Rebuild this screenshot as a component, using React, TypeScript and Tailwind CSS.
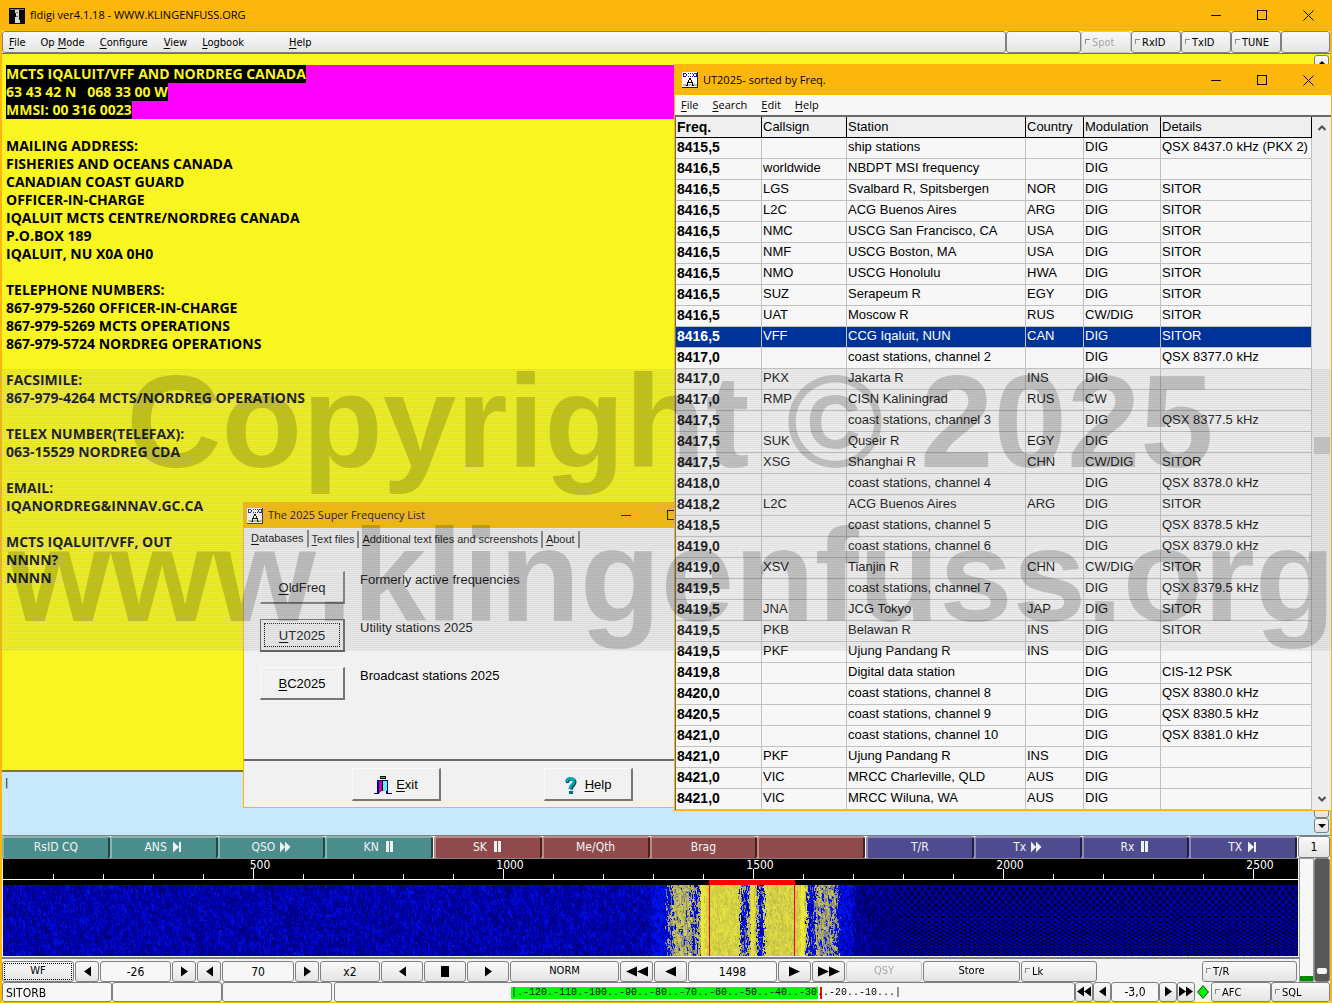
import React, { useEffect, useRef } from 'react';

const rxLines = [
  'MAILING ADDRESS:',
  'FISHERIES AND OCEANS CANADA',
  'CANADIAN COAST GUARD',
  'OFFICER-IN-CHARGE',
  'IQALUIT MCTS CENTRE/NORDREG CANADA',
  'P.O.BOX 189',
  'IQALUIT, NU X0A 0H0',
  '',
  'TELEPHONE NUMBERS:',
  '867-979-5260 OFFICER-IN-CHARGE',
  '867-979-5269 MCTS OPERATIONS',
  '867-979-5724 NORDREG OPERATIONS',
  '',
  'FACSIMILE:',
  '867-979-4264 MCTS/NORDREG OPERATIONS',
  '',
  'TELEX NUMBER(TELEFAX):',
  '063-15529 NORDREG CDA',
  '',
  'EMAIL:',
  'IQANORDREG&INNAV.GC.CA',
  '',
  'MCTS IQALUIT/VFF, OUT',
  'NNNN?',
  'NNNN',
];

const selectedLines = ['MCTS IQALUIT/VFF AND NORDREG CANADA', '63 43 42 N   068 33 00 W', 'MMSI: 00 316 0023'];

// freq, callsign, station, country, modulation, details
const stations: string[][] = [
  ['8415,5', '', 'ship stations', '', 'DIG', 'QSX 8437.0 kHz (PKX 2)'],
  ['8416,5', 'worldwide', 'NBDPT MSI frequency', '', 'DIG', ''],
  ['8416,5', 'LGS', 'Svalbard R, Spitsbergen', 'NOR', 'DIG', 'SITOR'],
  ['8416,5', 'L2C', 'ACG Buenos Aires', 'ARG', 'DIG', 'SITOR'],
  ['8416,5', 'NMC', 'USCG San Francisco, CA', 'USA', 'DIG', 'SITOR'],
  ['8416,5', 'NMF', 'USCG Boston, MA', 'USA', 'DIG', 'SITOR'],
  ['8416,5', 'NMO', 'USCG Honolulu', 'HWA', 'DIG', 'SITOR'],
  ['8416,5', 'SUZ', 'Serapeum R', 'EGY', 'DIG', 'SITOR'],
  ['8416,5', 'UAT', 'Moscow R', 'RUS', 'CW/DIG', 'SITOR'],
  ['8416,5', 'VFF', 'CCG Iqaluit, NUN', 'CAN', 'DIG', 'SITOR'],
  ['8417,0', '', 'coast stations, channel 2', '', 'DIG', 'QSX 8377.0 kHz'],
  ['8417,0', 'PKX', 'Jakarta R', 'INS', 'DIG', ''],
  ['8417,0', 'RMP', 'CISN Kaliningrad', 'RUS', 'CW', ''],
  ['8417,5', '', 'coast stations, channel 3', '', 'DIG', 'QSX 8377.5 kHz'],
  ['8417,5', 'SUK', 'Quseir R', 'EGY', 'DIG', ''],
  ['8417,5', 'XSG', 'Shanghai R', 'CHN', 'CW/DIG', 'SITOR'],
  ['8418,0', '', 'coast stations, channel 4', '', 'DIG', 'QSX 8378.0 kHz'],
  ['8418,2', 'L2C', 'ACG Buenos Aires', 'ARG', 'DIG', 'SITOR'],
  ['8418,5', '', 'coast stations, channel 5', '', 'DIG', 'QSX 8378.5 kHz'],
  ['8419,0', '', 'coast stations, channel 6', '', 'DIG', 'QSX 8379.0 kHz'],
  ['8419,0', 'XSV', 'Tianjin R', 'CHN', 'CW/DIG', 'SITOR'],
  ['8419,5', '', 'coast stations, channel 7', '', 'DIG', 'QSX 8379.5 kHz'],
  ['8419,5', 'JNA', 'JCG Tokyo', 'JAP', 'DIG', 'SITOR'],
  ['8419,5', 'PKB', 'Belawan R', 'INS', 'DIG', 'SITOR'],
  ['8419,5', 'PKF', 'Ujung Pandang R', 'INS', 'DIG', ''],
  ['8419,8', '', 'Digital data station', '', 'DIG', 'CIS-12 PSK'],
  ['8420,0', '', 'coast stations, channel 8', '', 'DIG', 'QSX 8380.0 kHz'],
  ['8420,5', '', 'coast stations, channel 9', '', 'DIG', 'QSX 8380.5 kHz'],
  ['8421,0', '', 'coast stations, channel 10', '', 'DIG', 'QSX 8381.0 kHz'],
  ['8421,0', 'PKF', 'Ujung Pandang R', 'INS', 'DIG', ''],
  ['8421,0', 'VIC', 'MRCC Charleville, QLD', 'AUS', 'DIG', ''],
  ['8421,0', 'VIC', 'MRCC Wiluna, WA', 'AUS', 'DIG', ''],
];

type Glyph = 'next' | 'ff' | 'pause';

const macroGroups: { style: string; items: { label: string; glyph?: Glyph }[] }[] = [
  {
    style: 'bg-[#4b8c8c] border-t-[#83b5b3] border-l-[#83b5b3] border-r-[#1e4848] border-b-[#2c5c5c]',
    items: [{ label: 'RsID CQ' }, { label: 'ANS', glyph: 'next' }, { label: 'QSO', glyph: 'ff' }, { label: 'KN', glyph: 'pause' }],
  },
  {
    style: 'bg-[#8f4b4b] border-t-[#bb8886] border-l-[#bb8886] border-r-[#482020] border-b-[#5c2c2c]',
    items: [{ label: 'SK', glyph: 'pause' }, { label: 'Me/Qth' }, { label: 'Brag' }, { label: '' }],
  },
  {
    style: 'bg-[#4f4b8f] border-t-[#8a88bb] border-l-[#8a88bb] border-r-[#202048] border-b-[#2c2c5c]',
    items: [{ label: 'T/R' }, { label: 'Tx', glyph: 'ff' }, { label: 'Rx', glyph: 'pause' }, { label: 'TX', glyph: 'next' }],
  },
];

const box = 'rounded-[3px] border border-[#808080] bg-linear-to-b from-[#f8f8f8] via-[#efefef] to-[#e4e4e4]';
const field = 'rounded-[3px] border border-[#808080] bg-[#f7f7f7]';

const MacroGlyph = ({ glyph }: { glyph: Glyph }) => (
  <svg width="12" height="12" viewBox="0 0 12 12" fill="#ecf1f1">
    {glyph === 'next' && <path d="M2 0.500L8 6L2 11.500ZM8 1h2v10h-2Z" />}
    {glyph === 'ff' && <path d="M1 0.500L6 6L1 11.500ZM6 0.500L11.500 6L6 11.500Z" />}
    {glyph === 'pause' && <path d="M3 0h3v11h-3ZM7 0h3v11h-3Z" />}
  </svg>
);

const Arrow = ({ dir, count = 1, wide = false }: { dir: 'left' | 'right'; count?: number; wide?: boolean }) => {
  const w = wide ? 11 : 7;
  return (
    <svg width={w * count} height="11" viewBox={`0 0 ${w * count} 11`} fill="#000" className={dir === 'left' ? 'rotate-180' : ''}>
      {Array.from({ length: count }, (_, i) => (
        <path key={i} d={`M${i * w} 0.500L${(i + 1) * w} 5.500L${i * w} 10.500Z`} />
      ))}
    </svg>
  );
};

const RadioIcon = () => (
  <svg width="16" height="16" viewBox="0 0 16 16" shapeRendering="crispEdges">
    <path d="M0 0h16v16H0Z" fill="#fff" />
    <path d="M0 15h16v1H0ZM15 0h1v16h-1Z" fill="#222" />
    <path d="M1 12h14v2H1Z" fill="#b9b9b9" />
    <path d="M1 1h1v4h-1ZM2 1h2v1h-2ZM2 4h2v1h-2ZM4 2h1v2h-1ZM6 1h1v1h-1ZM6 4h1v1h-1ZM8 1h1v1h-1ZM8 4h1v1h-1ZM10 1h1v1h-1ZM10 4h1v1h-1ZM12 1h2v1h-2ZM11 2h1v2h-1ZM12 4h2v1h-2ZM14 1h1v4h-1Z" fill="#1414d2" />
    <path d="M7 6h2v2h-2ZM6 8h1v2h-1ZM9 8h1v2h-1ZM5 10h1v3h-1ZM10 10h1v3h-1ZM6 10h4v1h-4ZM4 13h2v1h-2ZM10 13h2v1h-2Z" fill="#000" />
  </svg>
);

const CaptionButtons = () => (
  <div className="flex h-full">
    <button aria-label="Minimize" className="flex w-[46px] items-center justify-center">
      <svg width="11" height="11" shapeRendering="crispEdges"><path d="M0 5.500H10" stroke="#000" /></svg>
    </button>
    <button aria-label="Maximize" className="flex w-[46px] items-center justify-center">
      <svg width="11" height="11" shapeRendering="crispEdges"><rect x="0.500" y="0.500" width="9" height="9" fill="none" stroke="#000" /></svg>
    </button>
    <button aria-label="Close" className="flex w-[46px] items-center justify-center">
      <svg width="11" height="11"><path d="M0.500 0.500L10.500 10.500M10.500 0.500L0.500 10.500" stroke="#000" /></svg>
    </button>
  </div>
);

const MenuItem = ({ pre = '', hot, post = '', className = 'px-2' }: { pre?: string; hot: string; post?: string; className?: string }) => (
  <button className={className}>
    {pre}
    <u className="underline-offset-2">{hot}</u>
    {post}
  </button>
);

const Toggle = ({ label, width, disabled = false }: { label: string; width: string; disabled?: boolean }) => (
  <label className={`${box} ${width} flex items-center gap-0.5 pt-0.5 pl-[3px] text-[11px] ${disabled ? 'border-[#c4c4c4] text-[#a8a8a8]' : ''}`}>
    <input type="checkbox" disabled={disabled} className="mb-1 size-[5px] shrink-0 appearance-none border-t border-l border-[#8a8a8a]" />
    {label}
  </label>
);

const DialogButton = ({ children, size, focused = false }: { children: React.ReactNode; size: string; focused?: boolean }) => (
  <button
    className={`${size} flex h-[33px] items-center justify-center gap-2 bg-[#f1f1f1] text-[13px] ${
      focused ? 'border border-r-2 border-b-2 border-[#606060] p-[3px]' : 'border border-t-[#fafafa] border-l-[#fafafa] border-r-2 border-b-2 border-[#767676] pt-0.5'
    }`}
  >
    {focused ? <span className="flex h-full w-full items-center justify-center border border-dotted border-black pt-px">{children}</span> : children}
  </button>
);

// signal bands inside the passband: [from, to, level, spread]
const bands = [
  [648, 664, 0.3, 0.1],
  [664, 670, 0.42, 0.26],
  [670, 688, 0.58, 0.24],
  [688, 695, 0.38, 0.28],
  [695, 698, 0.6, 0.12],
  [698, 701, 0.97, 0.03],
  [701, 737, 0.8, 0.18],
  [737, 745, 0.36, 0.26],
  [745, 748, 0.64, 0.14],
  [748, 751, 0.9, 0.05],
  [751, 754, 0.64, 0.14],
  [754, 761, 0.34, 0.22],
  [761, 798, 0.77, 0.2],
  [798, 801, 0.97, 0.03],
  [801, 804, 0.68, 0.16],
  [804, 812, 0.33, 0.18],
  [812, 828, 0.52, 0.22],
  [828, 835, 0.44, 0.24],
  [835, 850, 0.29, 0.1],
];

const Waterfall = () => {
  const ref = useRef<HTMLCanvasElement>(null);

  useEffect(() => {
    const canvas = ref.current;
    const ctx = canvas?.getContext('2d');
    if (!canvas || !ctx) return;
    const { width, height } = canvas;
    const image = ctx.createImageData(width, height);
    let seed = 8416;
    const rand = () => {
      seed = (seed * 1664525 + 1013904223) >>> 0;
      return seed / 4294967296;
    };
    let previous = new Array(height).fill(0.5);
    for (let x = 0; x < width; x++) {
      const column: number[] = [];
      let n = rand();
      let shift = 0;
      for (let y = 0; y < height; y++) {
        if (rand() < 0.5) {
          n = rand() * 0.65 + previous[y] * 0.35;
          shift = (rand() - 0.5) * 5;
        }
        column.push(n);
        // the two steady carriers keep straight edges
        const steady = (x >= 698 && x < 701) || (x >= 798 && x < 801) || (x >= 748 && x < 751);
        const at = steady ? x : x + shift;
        const band = bands.find(([from, to]) => at >= from && at < to);
        let v = 0.235 + (n - 0.5) * 0.2;
        if (band) {
          v = band[2] + (n - 0.5) * 2 * band[3];
        } else if (x >= 850) {
          const fade = Math.min(1, (x - 850) / 60);
          const dots = Math.sin((x * Math.PI * 2) / 7) * Math.sin((y * y) / 90 + y / 2);
          v = 0.2 - 0.01 * fade + (dots > 0.5 ? -0.16 : dots < -0.7 ? 0.06 : 0) * fade + (n - 0.5) * (0.24 - 0.2 * fade);
        }
        v = Math.max(0, Math.min(1, v));
        let rgb = [0, 0, 0];
        if (v < 0.42) {
          rgb = [0, Math.max(0, (v - 0.24) * 200), Math.min(235, Math.max(0, (v - 0.02) * 790))];
        } else if (v < 0.58) {
          const t = (v - 0.42) / 0.16;
          rgb = [110 + t * 70, 110 + t * 65, 140 - t * 40];
        } else {
          const t = (v - 0.58) / 0.42;
          rgb = [185 + t * 55, 183 + t * 53, 55 + (1 - t) * n * 60];
        }
        const i = (y * width + x) * 4;
        image.data[i] = rgb[0];
        image.data[i + 1] = rgb[1];
        image.data[i + 2] = rgb[2];
        image.data[i + 3] = 255;
      }
      previous = column;
    }
    ctx.putImageData(image, 0, 0);
    ctx.fillStyle = '#f00';
    ctx.fillRect(706, 0, 1, height);
    ctx.fillRect(791, 0, 1, height);
  }, []);

  return <canvas ref={ref} width={1295} height={71} className="block h-[71px] w-full" />;
};

const Ruler = () => (
  <svg height="26" className="block w-full bg-black" shapeRendering="crispEdges">
    <path d="M0 20.500H1400" stroke="#fff" />
    {Array.from({ length: 25 }, (_, i) => {
      const x = 50 * (i + 1) + 0.5;
      return <path key={i} d={`M${x} ${(i + 1) % 5 === 0 ? 10 : 15}V20`} stroke="#fff" />;
    })}
    {[500, 1000, 1500, 2000, 2500].map((hz) => (
      <text key={hz} x={hz / 2 + 7} y="10" textAnchor="middle" fill="#fff" fontSize="12">{hz}</text>
    ))}
    <path d="M706 21H792V26H706Z" fill="#f00" />
  </svg>
);

const StationWindow = () => (
  <section className="absolute top-[64px] right-0 left-[674px] flex flex-col border border-[#fdb60a] bg-[#f7f7f7]">
    <header className="flex h-[30px] items-center bg-[#fdb60a] pl-[7px] font-['Open_Sans',sans-serif] text-[11px]">
      <RadioIcon />
      <h2 className="ml-[5px] flex-1">UT2025- sorted by Freq.</h2>
      <CaptionButtons />
    </header>
    <nav className="flex h-[20px] items-center gap-[14px] pl-[6px] font-['Open_Sans',sans-serif] text-[11px]">
      <MenuItem hot="F" post="ile" className="" />
      <MenuItem hot="S" post="earch" className="" />
      <MenuItem hot="E" post="dit" className="" />
      <MenuItem hot="H" post="elp" className="" />
    </nav>
    <div className="flex border-t-2 border-l border-[#696969]">
      <table className="flex-1 table-fixed border-separate border-spacing-0 font-['Liberation_Sans',Arial,sans-serif] text-[13px] leading-[18px]">
        <colgroup>
          <col className="w-[86px]" />
          <col className="w-[85px]" />
          <col />
          <col className="w-[58px]" />
          <col className="w-[77px]" />
          <col className="w-[151px]" />
        </colgroup>
        <thead>
          <tr className="bg-[#efefef] text-left">
            {['Freq.', 'Callsign', 'Station', 'Country', 'Modulation', 'Details'].map((name, i) => (
              <th key={name} className={`h-[21px] border-r border-b border-black p-0 pb-px pl-px ${i === 0 ? 'text-[14px] font-bold' : 'font-normal'}`}>
                {name}
              </th>
            ))}
          </tr>
        </thead>
        <tbody>
          {stations.map((row, r) => (
            <tr key={r} className={row[1] === 'VFF' ? 'bg-[#003399] text-white' : ''}>
              {row.map((cell, i) => (
                <td
                  key={i}
                  className={`h-[21px] overflow-hidden border-r border-b border-[#c0c0c0] p-0 pb-0.5 pl-px whitespace-nowrap ${i === 0 ? 'text-[14px] font-bold' : ''}`}
                >
                  {cell}
                </td>
              ))}
            </tr>
          ))}
        </tbody>
      </table>
      <div className="flex w-[19px] flex-col items-center bg-[#ededed] py-2">
        <svg width="8" height="6" fill="none" stroke="#505050" strokeWidth="2"><path d="M0.500 5L4 1.500L7.500 5" /></svg>
        <div className="mt-[306px] h-[17px] w-4 bg-[#c6c6c6]" />
        <svg width="8" height="6" fill="none" stroke="#505050" strokeWidth="2" className="mt-auto"><path d="M0.500 1L4 4.500L7.500 1" /></svg>
      </div>
    </div>
  </section>
);

const databases = [
  { hot: 'O', rest: 'ldFreq', text: 'Formerly active frequencies' },
  { hot: 'U', rest: 'T2025', text: 'Utility stations 2025' },
  { hot: 'B', rest: 'C2025', text: 'Broadcast stations 2025' },
];

const tabs = [
  { hot: 'D', rest: 'atabases' },
  { hot: 'T', rest: 'ext files' },
  { hot: 'A', rest: 'dditional text files and screenshots' },
  { hot: 'A', rest: 'bout' },
];

const LauncherWindow = () => (
  <section className="absolute top-[502px] left-[243px] flex h-[306px] w-[499px] flex-col border border-[#fdb60a] bg-[#f1f1f1] font-['Liberation_Sans',Arial,sans-serif]">
    <header className="flex h-[25px] shrink-0 items-center bg-[#fdb60a] pl-[3px] font-['Open_Sans',sans-serif] text-[11px]">
      <RadioIcon />
      <h2 className="ml-[5px] flex-1">The 2025 Super Frequency List</h2>
      <CaptionButtons />
    </header>
    <div role="tablist" className="flex h-[22px] items-center pl-1 text-[11px]">
      {tabs.map((tab, i) => (
        <button key={i} role="tab" className={`h-[17px] border-r-2 border-[#808080] px-[3px] ${i === 0 ? 'mb-0.5' : ''}`}>
          <u className="underline-offset-2">{tab.hot}</u>
          {tab.rest}
        </button>
      ))}
    </div>
    <div className="flex flex-1 flex-col gap-[15px] border-t border-[#fafafa] pt-5 pl-4">
      {databases.map((db, i) => (
        <div key={db.text} className="flex gap-[15px]">
          <DialogButton size="w-[85px]" focused={i === 1}>
            <span>
              <u className="underline-offset-2">{db.hot}</u>
              {db.rest}
            </span>
          </DialogButton>
          <p className="text-[13px] leading-[18px]">{db.text}</p>
        </div>
      ))}
    </div>
    <footer className="flex h-[48px] justify-center gap-[103px] border-t-2 border-[#6a6a6a] pt-[7px]">
      <DialogButton size="w-[89px]">
        <svg width="18" height="18" viewBox="0 0 18 18" shapeRendering="crispEdges">
          <path d="M6 0h6v3h-6Z" fill="#000" />
          <path d="M7 1h4v1h-4Z" fill="#00e000" />
          <path d="M3 4h11v13h4v1H12V5H5V18H0V17H3Z" fill="#00007f" />
          <path d="M5 5h3l0 9l-3 3Z" fill="#d000b0" />
          <path d="M8 5h1v10h-1Z" fill="#000" />
          <path d="M9 5h4v10h-4Z" fill="#5ff0f0" />
          <path d="M13 4h1v13h-1Z" fill="#00007f" />
        </svg>
        <span className="-ml-1"><u className="underline-offset-2">E</u>xit</span>
      </DialogButton>
      <DialogButton size="w-[89px]">
        <svg width="12" height="17" viewBox="0 0 12 17" fill="none">
          <path d="M2.500 6C2 1 10 1 10 5C10 8.500 6.500 8 6.500 12.500" stroke="#002c48" strokeWidth="3" />
          <path d="M1.500 5C2 0.500 9 0.500 9 4.500C9 8 5 7.500 5 12" stroke="#00a8b0" strokeWidth="3" />
          <path d="M4 14h4v3h-4Z" fill="#006878" />
        </svg>
        <span><u className="underline-offset-2">H</u>elp</span>
      </DialogButton>
    </footer>
  </section>
);

const NavButton = ({ label, width, children }: { label: string; width: string; children: React.ReactNode }) => (
  <button aria-label={label} className={`${box} ${width} flex items-center justify-center pb-px`}>
    {children}
  </button>
);

const App: React.FC = () => {
  return (
    <div className="relative flex h-screen flex-col overflow-hidden border-b border-[#fdb60a] bg-[#fdb60a] font-['DejaVu_Sans_Condensed','DejaVu_Sans',sans-serif] text-black">
      <header className="flex h-[31px] shrink-0 items-center pr-px pl-[9px] font-['Open_Sans',sans-serif] text-[11px]">
        <svg width="16" height="16" viewBox="0 0 16 16" shapeRendering="crispEdges">
          <path d="M0 0h16v16H0Z" fill="#0a0a0a" />
          <path d="M1 1h14v1H1Z" fill="#777" />
          <path d="M6 2h4v3h-4ZM7 5h3v4h-3ZM6 9h4v3h-4ZM6 12h5v3h-5Z" fill="#d8d8d8" />
          <path d="M7 4h2v1h-2ZM7 8h2v1h-2Z" fill="#777" />
          <path d="M7 1h2v1h-2Z" fill="#e06060" />
        </svg>
        <h1 className="ml-[5px] flex-1">fldigi ver4.1.18 - WWW.KLINGENFUSS.ORG</h1>
        <CaptionButtons />
      </header>

      <div className="mr-0.5 ml-0.5 flex min-h-0 flex-1 flex-col bg-[#f4f4f4]">
        <div className="flex h-[22px] shrink-0 text-[11px]">
          <nav className={`${box} flex flex-1 items-center pt-0.5`}>
            <MenuItem hot="F" post="ile" className="pr-2 pl-[6px]" />
            <MenuItem pre="Op " hot="M" post="ode" className="px-[7px]" />
            <MenuItem hot="C" post="onfigure" />
            <MenuItem hot="V" post="iew" />
            <MenuItem hot="L" post="ogbook" className="px-[7px]" />
            <MenuItem hot="H" post="elp" className="ml-[38px]" />
          </nav>
          <div className={`${box} w-[75px]`} />
          <Toggle label="Spot" width="w-[50px]" disabled />
          <Toggle label="RxID" width="w-[50px]" />
          <Toggle label="TxID" width="w-[50px]" />
          <Toggle label="TUNE" width="w-[50px]" />
          <div className={`${box} w-[49px]`} />
        </div>

        <main className="flex min-h-0 flex-1 border-t border-b-2 border-[#7d7a20] bg-[#f9f520]">
          <div className="min-w-0 flex-1 pt-[11px] pl-1 font-['Open_Sans',sans-serif] text-[14px] leading-[18px] font-bold whitespace-pre">
            {selectedLines.map((line) => (
              <p key={line} className="bg-[#ff00ff]">
                <mark className="inline-block bg-black text-[#f9f520]">{line}</mark>
              </p>
            ))}
            <p>{' '}</p>
            {rxLines.map((line, i) => (
              <p key={i}>{line || ' '}</p>
            ))}
          </div>
          <div className="w-4 pt-px">
            <button aria-label="Scroll up" className={`${box} flex h-[15px] w-[15px] items-center justify-center`}>
              <svg width="8" height="4"><path d="M0 4L4 0L8 4Z" /></svg>
            </button>
          </div>
        </main>

        <div className="flex h-[63px] shrink-0 bg-[#c8e8fc]">
          <textarea aria-label="Transmit text" defaultValue="|" className="flex-1 resize-none bg-transparent pt-1 pl-[3px] text-[11px] leading-[14px]" />
          <div className="flex w-4 flex-col justify-end pb-0.5">
            <div className={`${box} h-[46px] w-[15px]`} />
            <button aria-label="Scroll down" className={`${box} flex h-[15px] w-[15px] items-center justify-center`}>
              <svg width="8" height="4"><path d="M0 0L4 4L8 0Z" /></svg>
            </button>
          </div>
        </div>

        <div className="flex h-[23px] shrink-0 border-t border-[#808080]">
          <div className="grid flex-1 grid-cols-3 text-[12px] text-[#f2f4f4]">
            {macroGroups.map((group, g) => (
              <div key={g} className="grid grid-cols-4 pr-px">
                {group.items.map((item, i) => (
                  <button key={i} className={`${group.style} flex items-center justify-center gap-1 rounded-[3px] border-2 border-b pb-0.5`}>
                    {item.label}
                    {item.glyph && <MacroGlyph glyph={item.glyph} />}
                  </button>
                ))}
              </div>
            ))}
          </div>
          <button className={`${box} w-[32px] text-[12px]`}>1</button>
        </div>

        <div className="flex h-[124px] shrink-0">
          <div className="min-w-0 flex-1">
            <div className="border-t border-b-2 border-[#808080] px-px pb-px">
              <Ruler />
              <Waterfall />
            </div>
            <div className="mt-0.5 flex h-[21px] gap-px text-[11px]">
              <button className={`${box} w-[72px] p-px`}>
                <span className="flex h-full items-center justify-center border border-dotted border-black">WF</span>
              </button>
              <NavButton label="Lower limit down" width="w-6"><Arrow dir="left" /></NavButton>
              <input aria-label="Upper signal level" defaultValue="-26" className={`${field} w-[71px] text-center text-[12px]`} />
              <NavButton label="Lower limit up" width="w-6"><Arrow dir="right" /></NavButton>
              <NavButton label="Range down" width="w-6"><Arrow dir="left" /></NavButton>
              <input aria-label="Signal range" defaultValue="70" className={`${field} w-[72px] text-center text-[12px]`} />
              <NavButton label="Range up" width="w-6"><Arrow dir="right" /></NavButton>
              <button className={`${box} w-[60px] text-[12px]`}>x2</button>
              <NavButton label="Scroll left" width="w-[42px]"><Arrow dir="left" /></NavButton>
              <NavButton label="Center" width="w-[42px]"><span className="h-[11px] w-2 bg-black" /></NavButton>
              <NavButton label="Scroll right" width="w-[42px]"><Arrow dir="right" /></NavButton>
              <button className={`${box} w-[109px]`}>NORM</button>
              <NavButton label="Carrier fast down" width="w-[33px]"><Arrow dir="left" count={2} wide /></NavButton>
              <NavButton label="Carrier down" width="w-[33px]"><Arrow dir="left" wide /></NavButton>
              <input aria-label="Carrier" defaultValue="1498" className={`${field} w-[89px] text-center text-[12px]`} />
              <NavButton label="Carrier up" width="w-[33px]"><Arrow dir="right" wide /></NavButton>
              <NavButton label="Carrier fast up" width="w-[33px]"><Arrow dir="right" count={2} wide /></NavButton>
              <button disabled className={`${box} w-[76px] border-[#c4c4c4] text-[#a8a8a8]`}>QSY</button>
              <button className={`${box} w-[97px]`}>Store</button>
              <Toggle label="Lk" width="w-[76px]" />
              <div className="flex-1" />
              <Toggle label="T/R" width="w-[95px] mr-0.5" />
            </div>
          </div>
          <div className="flex w-[15px] flex-col justify-end border border-[#9a9a9a] bg-[#f7f7f7]">
            <div className="h-[5px] bg-[#008c00]" />
          </div>
          <input
            type="range"
            aria-label="Squelch level"
            defaultValue={6}
            className="h-[124px] w-4 appearance-none rounded-[3px] border border-[#808080] bg-[#585858] [direction:rtl] [writing-mode:vertical-lr] [&::-webkit-slider-thumb]:h-[6px] [&::-webkit-slider-thumb]:w-[10px] [&::-webkit-slider-thumb]:appearance-none [&::-webkit-slider-thumb]:rounded-[2px] [&::-webkit-slider-thumb]:bg-[#f7f7f7]"
          />
        </div>

        <footer className="flex h-[20px] shrink-0 text-[12px]">
          <div className={`${field} w-[110px] pl-[3px] leading-[20px]`}>SITORB</div>
          <div className={`${field} w-[110px]`} />
          <div className={`${field} mr-0.5 w-[110px]`} />
          <div className={`${field} flex flex-1 items-center pt-px pl-[176px]`}>
            <div className="relative h-3 font-['Liberation_Mono',monospace] text-[10px] leading-3">
              <div className="absolute top-0 left-0 h-3 w-[307px] bg-[#00ff00]" />
              <div className="absolute top-0 left-[309px] h-3 w-0.5 bg-[#ff0000]" />
              <span className="relative">|.-120.-110.-100..-90..-80..-70..-60..-50..-40..-30..-20..-10...|</span>
            </div>
          </div>
          <NavButton label="Offset fast down" width="w-[18px]"><Arrow dir="left" count={2} /></NavButton>
          <NavButton label="Offset down" width="w-[18px]"><Arrow dir="left" /></NavButton>
          <input aria-label="Squelch" defaultValue="-3,0" className={`${field} w-[48px] text-center text-[12px]`} />
          <NavButton label="Offset up" width="w-[18px]"><Arrow dir="right" /></NavButton>
          <NavButton label="Offset fast up" width="w-[18px]"><Arrow dir="right" count={2} /></NavButton>
          <div className="flex w-4 items-center justify-center">
            <svg width="12" height="14"><path d="M6 0.500L11.500 7L6 13.500L0.500 7Z" fill="#00f000" stroke="#205020" /></svg>
          </div>
          <Toggle label="AFC" width="w-[60px]" />
          <Toggle label="SQL" width="w-[59px]" />
        </footer>
      </div>

      <LauncherWindow />
      <StationWindow />

      <div aria-hidden="true" className="pointer-events-none absolute inset-x-0 top-[369px] h-[282px] bg-[repeating-linear-gradient(180deg,rgba(167,167,167,0.28)_0_1px,rgba(167,167,167,0.14)_1px_2px)]" />
      <div className="pointer-events-none absolute inset-x-0 top-[345px] pl-2 text-center font-['Liberation_Sans',Arial,sans-serif] text-[132px] leading-[154px] font-bold whitespace-nowrap text-black/18 [font-kerning:none]">
        <p>Copyright © 2025</p>
        <p>www.klingenfuss.org</p>
      </div>
    </div>
  );
};

export default App;
